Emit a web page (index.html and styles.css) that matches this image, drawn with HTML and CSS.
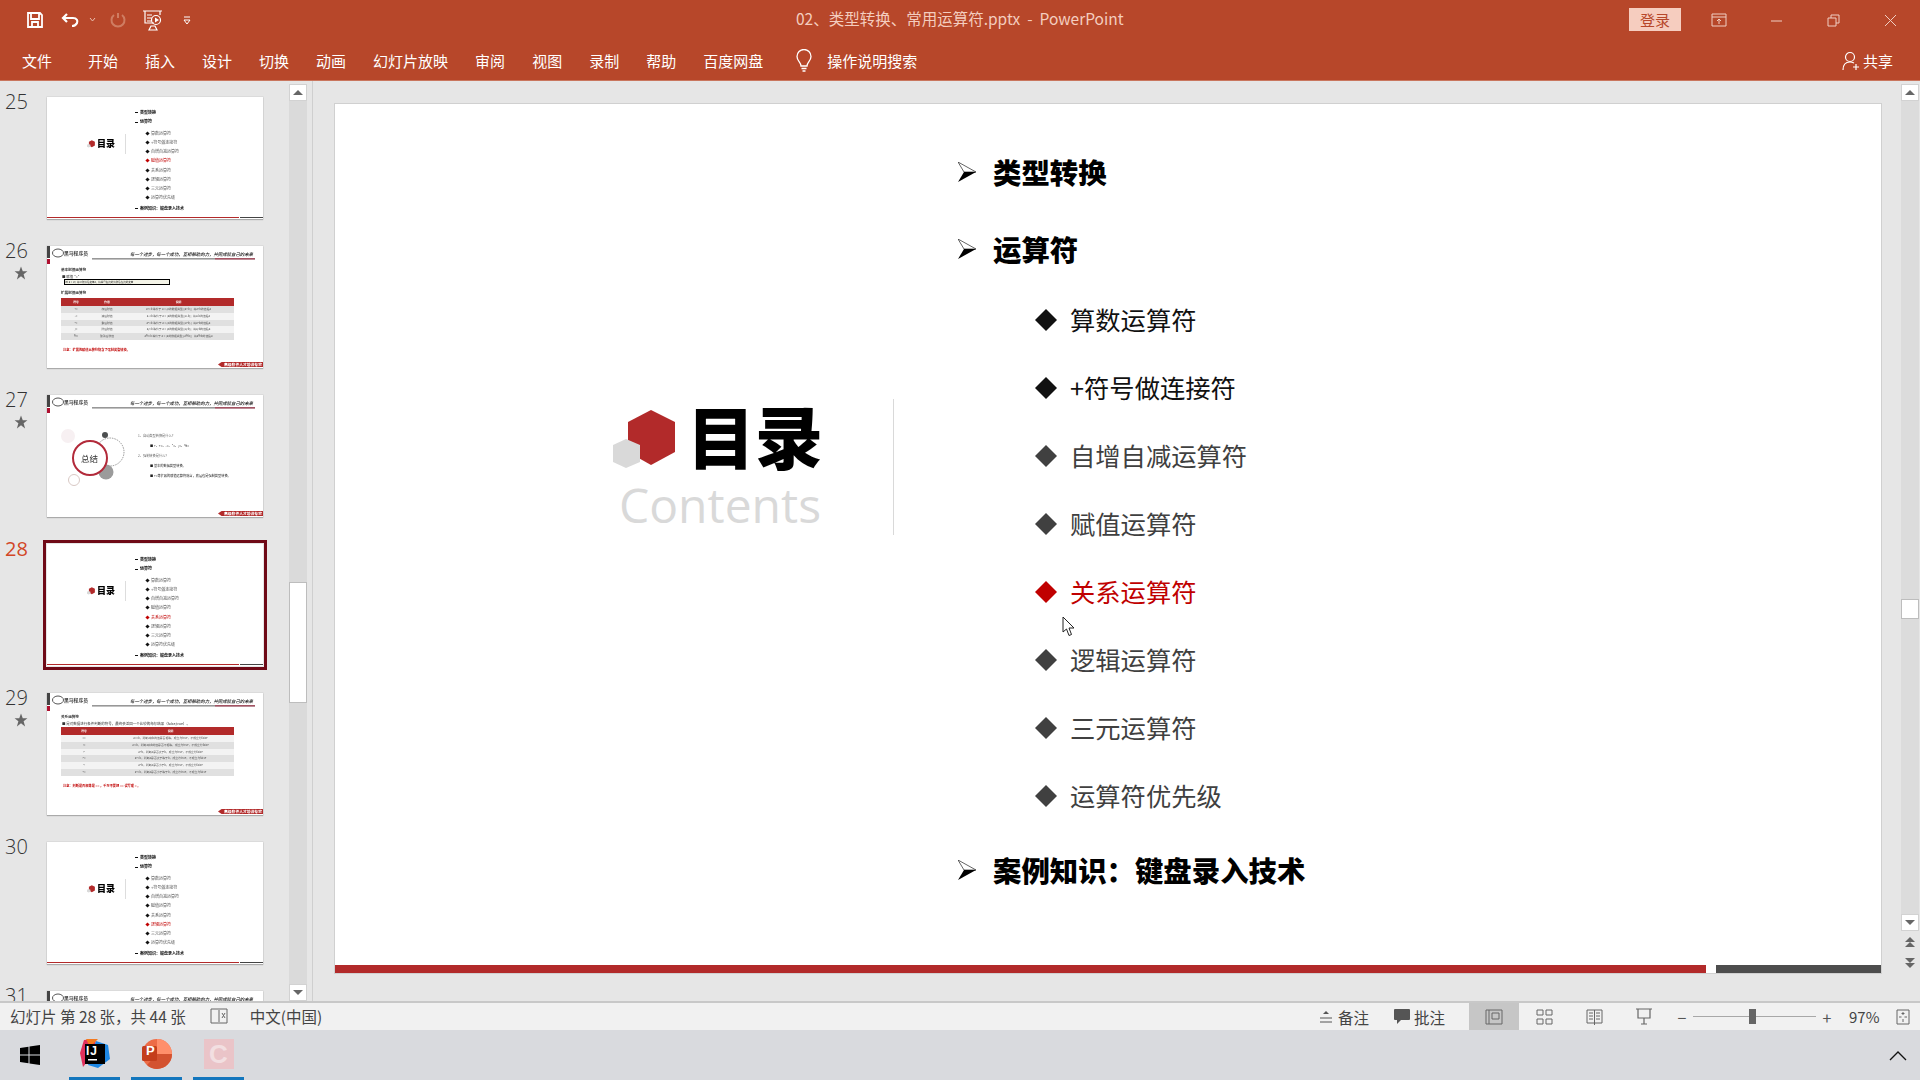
FILE: index.html
```html
<!DOCTYPE html>
<html lang="zh-CN">
<head>
<meta charset="utf-8">
<title>02、类型转换、常用运算符.pptx - PowerPoint</title>
<link rel="stylesheet" href="styles.css">
</head>
<body>
<svg class="defs" width="0" height="0">
  <symbol id="arrowhead" viewBox="0 0 18 20"><path d="M0 0 L18 10 L6 10 Z" fill="#fff" stroke="#222" stroke-width=".7"/><path d="M0 20 L18 10 L6 10 Z" fill="#000"/></symbol>
  <symbol id="diamond" viewBox="0 0 22 22"><path d="M11 0 L22 11 L11 22 L0 11 Z" fill="currentColor"/></symbol>
  <symbol id="star" viewBox="0 0 24 24"><path d="M12 1 L15 9 L23 9 L16.500 14 L19 23 L12 17.500 L5 23 L7.500 14 L1 9 L9 9 Z" fill="currentColor"/></symbol>
  <symbol id="logo" viewBox="0 0 63 59"><path d="M15 12 L38 0 L62 12 L62 42 L38 55 L15 42 Z" fill="#b22a2a"/><path d="M0 35 L13 29 L27 35 L27 52 L13 58 L0 52 Z" fill="#d9d9d9"/></symbol>
  <symbol id="itcast" viewBox="0 0 216 18"><rect width="3" height="12" fill="#444"/><rect y="13" width="3" height="5" fill="#b01030"/><ellipse cx="11" cy="7" rx="5.500" ry="4" fill="none" stroke="#555" stroke-width="1"/><rect x="45" y="12.500" width="163" height=".8" fill="#333"/><rect x="168" y="12.500" width="40" height=".8" fill="#b01030"/></symbol>
</svg>

<header class="titlebar">
  <div class="quick">
    <svg width="18" height="18" viewBox="0 0 18 18"><path d="M2 2 H14 L16 4 V16 H2 Z M5 2.500 V8 H13 V2.500 M6 16 V11 H12 V16" fill="none" stroke="#fff" stroke-width="1.800"/></svg>
    <svg class="q-undo" width="20" height="18" viewBox="0 0 20 18"><path d="M6 3 L2 7 L6 11 M2 7 H12 C16 7 17 10 16 12 C15 14 13 15 11 15" fill="none" stroke="#fff" stroke-width="2.200"/></svg>
    <svg class="q-drop" width="7" height="6" viewBox="0 0 7 6"><path d="M1 1 L3.500 4 L6 1" fill="none" stroke="#e9bfb0" stroke-width="1"/></svg>
    <svg class="q-redo" width="18" height="18" viewBox="0 0 18 18"><path d="M9 2 V7 M5 4 A6.500 6.500 0 1 0 13 4" fill="none" stroke="#cf7d62" stroke-width="2"/></svg>
    <svg class="q-show" width="22" height="22" viewBox="0 0 22 22"><path d="M1 2 H20 M3 2 V14 H12 M18 2 V6 M5 6 H10 M5 9 H10 M5 12 H9 M7 21 H15 L13 17 H9 Z" fill="none" stroke="#fff" stroke-width="1.200"/><circle cx="14" cy="11" r="4.500" fill="none" stroke="#fff" stroke-width="1.200"/><path d="M13 8.500 L17 11 L13 13.500 Z" fill="#fff"/></svg>
    <svg class="q-more" width="8" height="9" viewBox="0 0 8 9"><path d="M1 1 H7 M1 4 H7 L4 8 Z" fill="none" stroke="#fff" stroke-width="1"/></svg>
  </div>
  <div class="doc-title">02、类型转换、常用运算符.pptx&nbsp; - &nbsp;PowerPoint</div>
  <div class="win">
    <button class="login">登录</button>
    <svg class="win-ribbon" width="16" height="14" viewBox="0 0 16 14"><path d="M1 1 H15 V13 H1 Z M1 4 H15 M8 11 V6 M6 8 L8 6 L10 8" fill="none" stroke="#f0cfc3" stroke-width="1"/></svg>
    <svg class="win-min" width="13" height="13" viewBox="0 0 13 13"><path d="M1 7 H12" stroke="#f0cfc3" stroke-width="1"/></svg>
    <svg class="win-max" width="13" height="13" viewBox="0 0 13 13"><path d="M1 4 H9 V12 H1 Z M4 4 V1 H12 V9 H9" fill="none" stroke="#f0cfc3" stroke-width="1"/></svg>
    <svg class="win-close" width="13" height="13" viewBox="0 0 13 13"><path d="M1 1 L12 12 M12 1 L1 12" stroke="#f0cfc3" stroke-width="1"/></svg>
  </div>
</header>

<nav class="ribbon">
  <span class="tab tab-file">文件</span>
  <span class="tab">开始</span>
  <span class="tab">插入</span>
  <span class="tab">设计</span>
  <span class="tab">切换</span>
  <span class="tab">动画</span>
  <span class="tab">幻灯片放映</span>
  <span class="tab">审阅</span>
  <span class="tab">视图</span>
  <span class="tab">录制</span>
  <span class="tab">帮助</span>
  <span class="tab">百度网盘</span>
  <span class="search">
    <svg width="18" height="24" viewBox="0 0 18 24"><path d="M6 17 C6 13 2 12 2 7.500 A7 7 0 0 1 16 7.500 C16 12 12 13 12 17 Z M6.500 19.500 H11.500 M7.500 22 H10.500" fill="none" stroke="#fff" stroke-width="1.300"/></svg>
    操作说明搜索
  </span>
  <span class="share">
    <svg width="18" height="20" viewBox="0 0 18 20"><circle cx="8" cy="6" r="4.500" fill="none" stroke="#fff" stroke-width="1.200"/><path d="M1 19 C1 13 4 11 8 11 C10 11 11 11.500 12 12 M14 13 V19 M11 16 H17" fill="none" stroke="#fff" stroke-width="1.200"/></svg>
    共享
  </span>
</nav>

<main class="work">
  <aside class="panel">
    <div class="thumbs">

      <div class="thumb-row">
        <div class="num">25</div>
        <div class="thumb">
          <div class="mini-toc">
            <div class="mini-head"><svg class="mini-logo"><use href="#logo"/></svg><b>目录</b></div>
            <ul class="mini-list">
              <li class="m-main">类型转换</li>
              <li class="m-main">运算符</li>
              <li>算数运算符</li><li>+符号做连接符</li><li>自增自减运算符</li>
              <li class="m-on">赋值运算符</li>
              <li>关系运算符</li><li>逻辑运算符</li><li>三元运算符</li><li>运算符优先级</li>
              <li class="m-main">案例知识：键盘录入技术</li>
            </ul>
          </div>
          <div class="mini-bars"><i></i><s></s></div>
        </div>
      </div>

      <div class="thumb-row">
        <div class="num">26<svg class="star"><use href="#star"/></svg></div>
        <div class="thumb">
          <svg class="mini-top"><use href="#itcast"/></svg>
          <div class="mini-brand">黑马程序员</div>
          <div class="mini-slogan">每一个进步，每一个成功，互相帮助的力，共同成就自己的未来</div>
          <div class="mini-body">
            <p class="m-title">基本赋值运算符</p>
            <p class="m-text">■ 赋值 "="</p>
            <p class="m-box">int a = 10; 将10赋值给变量a，将等号右边的值赋给左边的变量</p>
            <p class="m-title m-second">扩展赋值运算符</p>
            <table class="m-table">
              <tr><th class="c1">符号</th><th class="c2">作用</th><th>说明</th></tr>
              <tr class="dark"><td>+=</td><td>加后赋值</td><td>a+=b 等价于 a = (a的数据类型)(a+b)；将a+b的值给a</td></tr>
              <tr><td>-=</td><td>减后赋值</td><td>a-=b 等价于 a = (a的数据类型)(a-b)；将a-b的值给a</td></tr>
              <tr class="dark"><td>*=</td><td>乘后赋值</td><td>a*=b 等价于 a = (a的数据类型)(a*b)；将a*b的值给a</td></tr>
              <tr><td>/=</td><td>除后赋值</td><td>a/=b 等价于 a = (a的数据类型)(a/b)；将a/b的值给a</td></tr>
              <tr class="dark"><td>%=</td><td>取余后赋值</td><td>a%=b 等价于 a = (a的数据类型)(a%b)；将a%b的值给a</td></tr>
            </table>
            <p class="m-note">注意：扩展的赋值运算符隐含了强制类型转换。</p>
          </div>
          <div class="mini-tag">高级软件人才培训专家</div>
        </div>
      </div>

      <div class="thumb-row">
        <div class="num">27<svg class="star"><use href="#star"/></svg></div>
        <div class="thumb">
          <svg class="mini-top"><use href="#itcast"/></svg>
          <div class="mini-brand">黑马程序员</div>
          <div class="mini-slogan">每一个进步，每一个成功，互相帮助的力，共同成就自己的未来</div>
          <div class="mini-sum">
            <div class="sum-art">
              <svg width="72" height="74" viewBox="0 0 72 74">
                <circle cx="9" cy="22" r="7" fill="#f7f0f2"/>
                <circle cx="51" cy="38" r="14" fill="none" stroke="#555" stroke-width=".6" stroke-dasharray="1.500 1"/>
                <circle cx="46" cy="21" r="3" fill="#4c4f50"/>
                <circle cx="47" cy="58" r="7.500" fill="#9b9b9b"/>
                <circle cx="31" cy="44" r="17" fill="#fff" stroke="#b22a3a" stroke-width="2"/>
                <circle cx="15" cy="66" r="5.500" fill="#fff" stroke="#d8c8c4" stroke-width="1"/>
              </svg>
              <span class="sum-label">总结</span>
            </div>
            <div class="sum-text">
              <p>1、自动类型转换是什么？</p>
              <p class="strong">■ +、+=、-=、*=、/=、%=</p>
              <p>2、强制转换是什么？</p>
              <p class="strong">■ 基本的数据类型转换。</p>
              <p class="strong">■ +=等扩展的赋值运算符隐含，底层也是强制类型转换。</p>
            </div>
          </div>
          <div class="mini-tag">高级软件人才培训专家</div>
        </div>
      </div>

      <div class="thumb-row">
        <div class="num num-on">28</div>
        <div class="thumb thumb-on">
          <div class="mini-toc">
            <div class="mini-head"><svg class="mini-logo"><use href="#logo"/></svg><b>目录</b></div>
            <ul class="mini-list">
              <li class="m-main">类型转换</li>
              <li class="m-main">运算符</li>
              <li>算数运算符</li><li>+符号做连接符</li><li>自增自减运算符</li><li>赋值运算符</li>
              <li class="m-on">关系运算符</li>
              <li>逻辑运算符</li><li>三元运算符</li><li>运算符优先级</li>
              <li class="m-main">案例知识：键盘录入技术</li>
            </ul>
          </div>
          <div class="mini-bars"><i></i><s></s></div>
        </div>
      </div>

      <div class="thumb-row">
        <div class="num">29<svg class="star"><use href="#star"/></svg></div>
        <div class="thumb">
          <svg class="mini-top"><use href="#itcast"/></svg>
          <div class="mini-brand">黑马程序员</div>
          <div class="mini-slogan">每一个进步，每一个成功，互相帮助的力，共同成就自己的未来</div>
          <div class="mini-body">
            <p class="m-title">关系运算符</p>
            <p class="m-text">■ 是对数据进行条件判断的符号，最终会返回一个比较的布尔结果（false,true）。</p>
            <table class="m-table m-table2">
              <tr><th class="c1">符号</th><th>说明</th></tr>
              <tr><td>==</td><td>a==b，判断a和b的值是否相等，成立为true，不成立为false</td></tr>
              <tr class="dark"><td>!=</td><td>a!=b，判断a和b的值是否不相等，成立为true，不成立为false</td></tr>
              <tr><td>&gt;</td><td>a&gt;b，判断a是否大于b，成立为true，不成立为false</td></tr>
              <tr class="dark"><td>&gt;=</td><td>a&gt;=b，判断a是否大于等于b，成立为true，不成立为false</td></tr>
              <tr><td>&lt;</td><td>a&lt;b，判断a是否小于b，成立为true，不成立为false</td></tr>
              <tr class="dark"><td>&lt;=</td><td>a&lt;=b，判断a是否小于等于b，成立为true，不成立为false</td></tr>
            </table>
            <p class="m-note">注意：判断是否相等是 == ，千万不要把 == 误写成 = 。</p>
          </div>
          <div class="mini-tag">高级软件人才培训专家</div>
        </div>
      </div>

      <div class="thumb-row">
        <div class="num">30</div>
        <div class="thumb">
          <div class="mini-toc">
            <div class="mini-head"><svg class="mini-logo"><use href="#logo"/></svg><b>目录</b></div>
            <ul class="mini-list">
              <li class="m-main">类型转换</li>
              <li class="m-main">运算符</li>
              <li>算数运算符</li><li>+符号做连接符</li><li>自增自减运算符</li><li>赋值运算符</li><li>关系运算符</li>
              <li class="m-on">逻辑运算符</li>
              <li>三元运算符</li><li>运算符优先级</li>
              <li class="m-main">案例知识：键盘录入技术</li>
            </ul>
          </div>
          <div class="mini-bars"><i></i><s></s></div>
        </div>
      </div>

      <div class="thumb-row">
        <div class="num">31</div>
        <div class="thumb">
          <svg class="mini-top"><use href="#itcast"/></svg>
          <div class="mini-brand">黑马程序员</div>
          <div class="mini-slogan">每一个进步，每一个成功，互相帮助的力，共同成就自己的未来</div>
        </div>
      </div>

    </div>
    <div class="scroll">
      <div class="sb-btn"><span class="up"></span></div>
      <div class="sb-track sb-track-left"><div class="sb-thumb sb-thumb-left"></div></div>
      <div class="sb-btn"><span class="down"></span></div>
    </div>
  </aside>

  <section class="editor">
    <article class="slide">
      <div class="slide-body">
        <div class="toc-head">
          <div class="toc-title">
            <svg class="toc-logo"><use href="#logo"/></svg>
            <h1>目录</h1>
          </div>
          <div class="toc-en">Contents</div>
        </div>
        <ul class="toc-list">
          <li class="main"><svg class="arrow"><use href="#arrowhead"/></svg>类型转换</li>
          <li class="main"><svg class="arrow"><use href="#arrowhead"/></svg>运算符</li>
          <li class="sub first done"><svg class="dia"><use href="#diamond"/></svg>算数运算符</li>
          <li class="sub done"><svg class="dia"><use href="#diamond"/></svg>+符号做连接符</li>
          <li class="sub"><svg class="dia"><use href="#diamond"/></svg>自增自减运算符</li>
          <li class="sub"><svg class="dia"><use href="#diamond"/></svg>赋值运算符</li>
          <li class="sub now"><svg class="dia"><use href="#diamond"/></svg>关系运算符</li>
          <li class="sub"><svg class="dia"><use href="#diamond"/></svg>逻辑运算符</li>
          <li class="sub"><svg class="dia"><use href="#diamond"/></svg>三元运算符</li>
          <li class="sub"><svg class="dia"><use href="#diamond"/></svg>运算符优先级</li>
          <li class="main last"><svg class="arrow"><use href="#arrowhead"/></svg>案例知识：键盘录入技术</li>
        </ul>
      </div>
      <div class="slide-bars"><i></i><s></s></div>
    </article>
    <svg class="cursor" width="14" height="21" viewBox="0 0 14 21"><path d="M1 1 V16 L4.500 13 L7 19.500 L9.500 18.500 L7 12 H12 Z" fill="#fff" stroke="#222" stroke-width="1"/></svg>
  </section>

  <div class="scroll scroll-right">
    <div class="sb-btn"><span class="up"></span></div>
    <div class="sb-track"><div class="sb-thumb sb-thumb-right"></div></div>
    <div class="sb-btn"><span class="down"></span></div>
    <div class="sb-page"><span class="up"></span><span class="up"></span></div>
    <div class="sb-page"><span class="down"></span><span class="down"></span></div>
  </div>
</main>

<footer class="status">
  <span class="st-count">幻灯片 第 28 张，共 44 张</span>
  <svg class="st-spell" width="18" height="16" viewBox="0 0 18 16"><path d="M8 1 H1 V15 H8 M9 0 V16 M10 1 H17 V15 H10 M12 5 L15 10 M15 5 L12 10" fill="none" stroke="#666" stroke-width="1"/></svg>
  <span class="st-lang">中文(中国)</span>
  <span class="st-right">
    <span class="st-item">
      <svg width="14" height="14" viewBox="0 0 14 14"><path d="M7 1 L10 4 H4 Z" fill="#555"/><path d="M1 8 H13 M1 12 H13" stroke="#555" stroke-width="1"/></svg>备注
    </span>
    <span class="st-item st-comment">
      <svg width="18" height="17" viewBox="0 0 18 17"><path d="M2 1 H16 Q17 1 17 2 V11 Q17 12 16 12 H8 L4 16 V12 H2 Q1 12 1 11 V2 Q1 1 2 1 Z" fill="#555"/></svg>批注
    </span>
    <span class="view view-on"><svg width="18" height="16" viewBox="0 0 18 16"><path d="M1 1 H17 V15 H1 Z M4 1 V15 M7 4 H14 V10 H7 Z" fill="none" stroke="#666" stroke-width="1"/></svg></span>
    <span class="view"><svg width="17" height="16" viewBox="0 0 17 16"><path d="M1 1 H7 V6 H1 Z M10 1 H16 V6 H10 Z M1 10 H7 V15 H1 Z M10 10 H16 V15 H10 Z" fill="none" stroke="#666" stroke-width="1"/></svg></span>
    <span class="view"><svg width="17" height="16" viewBox="0 0 17 16"><path d="M1 1 H16 V14 H1 Z M8.500 1 V16 M3 4 H7 M3 7 H7 M3 10 H7 M10 4 H14 M10 7 H14 M10 10 H14" fill="none" stroke="#666" stroke-width="1"/></svg></span>
    <span class="view"><svg width="18" height="17" viewBox="0 0 18 17"><path d="M1 1 H17 M3 1 V10 H15 V1 M9 10 V16 M6 16 H12" fill="none" stroke="#666" stroke-width="1.200"/></svg></span>
    <span class="zoom">
      <span class="z-btn">−</span>
      <span class="z-track"><span class="z-knob"></span></span>
      <span class="z-btn">+</span>
    </span>
    <span class="z-pct">97%</span>
    <svg class="z-fit" width="14" height="16" viewBox="0 0 14 16"><path d="M1 1 H13 V15 H1 Z M7 3 V6 M5.500 4.500 H8.500 M7 10 V13 M3 8 H5.500 M8.500 8 H11" fill="none" stroke="#666" stroke-width="1"/></svg>
  </span>
</footer>

<div class="taskbar">
  <svg class="win-logo" width="20" height="20" viewBox="0 0 20 20"><path d="M0 3 L8.500 1.700 V9.500 H0 Z M9.500 1.500 L20 0 V9.500 H9.500 Z M0 10.500 H8.500 V18.300 L0 17 Z M9.500 10.500 H20 V20 L9.500 18.500 Z" fill="#000"/></svg>
  <div class="apps">
    <span class="app">
      <svg width="30" height="30" viewBox="0 0 30 30"><path d="M4 1 L16 0 L14 14 L3 28 L0 14 Z" fill="#e0305c"/><path d="M16 2 L28 6 L30 20 L18 29 L8 26 Z" fill="#1e88e5"/><path d="M6 0 L18 0 L10 8 Z" fill="#f4791f"/><rect x="5" y="5" width="20" height="20" fill="#000"/><rect x="8" y="20" width="9" height="1.500" fill="#fff"/></svg>
      <span class="ij">IJ</span>
    </span>
    <span class="app">
      <svg width="30" height="30" viewBox="0 0 30 30"><circle cx="15" cy="15" r="15" fill="#ed6c47"/><path d="M15 0 A15 15 0 0 1 30 15 H15 Z" fill="#ff8f6b"/><path d="M15 15 H30 A15 15 0 0 1 15 30 A15 15 0 0 1 5 26 Z" fill="#d35230"/><rect x="0" y="7" width="15" height="15" rx="1.500" fill="#c43e1c"/></svg>
      <span class="pp">P</span>
    </span>
    <span class="app">
      <span class="camt">C</span>
    </span>
  </div>
  <svg class="tray" width="18" height="11" viewBox="0 0 18 11"><path d="M1 10 L9 2 L17 10" fill="none" stroke="#111" stroke-width="1.300"/></svg>
</div>
</body>
</html>
```

FILE: styles.css
```css
* {
    box-sizing: border-box;
}

html, body {
    margin: 0;
    height: 1080px;
    overflow: hidden;
}

body {
    width: 1920px;
    display: flex;
    flex-direction: column;
    font-family: "Noto Sans CJK SC", "Liberation Sans", sans-serif;
    background: #e6e6e6;
    color: #444;
}

.defs {
    position: absolute;
}

ul, p, h1 {
    margin: 0;
    padding: 0;
}

ul {
    list-style: none;
}

/* title bar */
.titlebar {
    height: 40px;
    flex: none;
    display: flex;
    align-items: center;
    background: #b7472a;
    position: relative;
}

.quick {
    display: flex;
    align-items: center;
    padding-left: 26px;
    gap: 4px;
}

.q-undo {
    margin-left: 13px;
}

.q-drop {
    margin-left: 4px;
}

.q-redo {
    margin-left: 9px;
}

.q-show {
    margin-left: 11px;
}

.q-more {
    margin-left: 15px;
}

.doc-title {
    position: absolute;
    left: 796px;
    top: 7px;
    font-size: 15.500px;
    line-height: 22px;
    color: #f4cdbf;
    white-space: nowrap;
}

.win {
    margin-left: auto;
    display: flex;
    align-items: center;
}

.login {
    width: 52px;
    height: 23px;
    margin-top: -1px;
    padding: 0;
    border: 0;
    background: #f6cdbf;
    color: #b7472a;
    font: 15px/23px "Noto Sans CJK SC", sans-serif;
}

.win-ribbon {
    margin-left: 30px;
}

.win-min {
    margin-left: 43px;
}

.win-max {
    margin-left: 44px;
}

.win-close {
    margin-left: 44px;
    margin-right: 23px;
}

/* ribbon tabs */
.ribbon {
    height: 41px;
    flex: none;
    display: flex;
    align-items: center;
    gap: 27px;
    padding: 1px 27px 0 22px;
    background: #b7472a;
    color: #fff;
    font-size: 15px;
    line-height: 22px;
    border-bottom: 1px solid #c9765e;
}

.tab-file {
    margin-right: 9px;
}

.search {
    display: flex;
    align-items: center;
    gap: 14px;
    margin-left: 5px;
}

.share {
    margin-left: auto;
    display: flex;
    align-items: center;
    gap: 3px;
}

/* work area */
.work {
    flex: 1;
    min-height: 0;
    display: flex;
    background: #e6e6e6;
    border-bottom: 2px solid #c8c8c8;
}

.panel {
    width: 313px;
    flex: none;
    display: flex;
    border-right: 1px solid #cfcfcf;
}

.thumbs {
    width: 289px;
    flex: none;
    padding-top: 16px;
    overflow: hidden;
}

.thumb-row {
    height: 149px;
    display: flex;
    padding-left: 5px;
}

.num {
    width: 42px;
    flex: none;
    margin-top: -5px;
    font-family: "Open Sans", sans-serif;
    font-size: 20px;
    font-weight: 300;
    line-height: 20px;
    color: #333;
    display: flex;
    flex-direction: column;
}

.num-on {
    color: #d24726;
    font-weight: 400;
}

.star {
    width: 14px;
    height: 14px;
    margin: 5px 0 0 9px;
    color: #666;
}

.thumb {
    width: 216px;
    height: 122px;
    flex: none;
    position: relative;
    display: flex;
    flex-direction: column;
    background: #fff;
    box-shadow: 0 1px 1px #aaa, 0 0 0 .5px #cfcfcf;
    color: #333;
    font-size: 3.500px;
    line-height: 5px;
}

/* the thumbnails are soft in the reference */
.thumb > * {
    filter: blur(.3px);
}

.thumb-on {
    outline: 3px solid #6f0a17;
    outline-offset: 1px;
    box-shadow: none;
}

/* table of contents, thumbnail size */
.mini-toc {
    flex: 1;
    display: flex;
    min-height: 0;
}

.mini-head {
    width: 79px;
    flex: none;
    height: 20px;
    margin-top: 37px;
    padding-left: 40px;
    display: flex;
    align-items: center;
    gap: 2px;
    border-right: 1px solid #ddd;
}

.mini-logo {
    width: 8px;
    height: 8px;
    flex: none;
}

.mini-head b {
    font-size: 9px;
    line-height: 12px;
    font-weight: 900;
    color: #000;
}

.mini-list {
    padding: 11px 0 0 20px;
    font-size: 4px;
    line-height: 9.250px;
    color: #555;
}

.mini-list li {
    height: 9.250px;
    white-space: nowrap;
}

.mini-list li::before {
    content: "";
    display: inline-block;
    width: 3px;
    height: 3px;
    margin-right: 2px;
    background: #111;
    transform: rotate(45deg);
}

.mini-list li.m-main {
    margin-left: -11px;
    color: #111;
    font-weight: 700;
}

.mini-list li.m-main:nth-child(2) {
    margin-bottom: 2px;
}

.mini-list li.m-main:last-child {
    margin-top: 1px;
}

.mini-list li.m-main::before {
    width: 3px;
    height: 1px;
    vertical-align: middle;
    transform: none;
}

.mini-list li.m-on {
    color: #c00000;
}

.mini-list li.m-on::before {
    background: #c00000;
}

.mini-bars, .slide-bars {
    flex: none;
    display: flex;
}

.mini-bars {
    height: 1.500px;
    gap: 1.500px;
    margin-bottom: 1px;
}

.mini-bars i, .slide-bars i {
    flex: 1;
    background: #b22a2a;
}

.mini-bars s {
    width: 23px;
    background: #444;
}

/* content slide, thumbnail size */
.mini-top {
    width: 216px;
    height: 18px;
    flex: none;
}

.mini-brand {
    position: absolute;
    left: 17px;
    top: 4px;
    font-size: 4.800px;
    font-weight: 700;
    color: #444;
}

.mini-slogan {
    position: absolute;
    left: 83px;
    top: 5px;
    font-size: 4.400px;
    line-height: 6px;
    font-style: italic;
    font-weight: 500;
    white-space: nowrap;
    color: #111;
}

.mini-body {
    padding: 2px 14px 0;
}

.m-title {
    font-weight: 700;
    font-size: 3.600px;
    line-height: 8px;
}

.m-second {
    margin-top: 4px;
}

.m-text {
    padding-left: 1px;
}

.m-box {
    width: 106px;
    height: 6px;
    margin: 0 0 0 3px;
    border: 1px solid #000;
    font-size: 2.500px;
    line-height: 4px;
    white-space: nowrap;
    background: #f4f4e8;
}

.m-table {
    width: 173px;
    margin-top: 1px;
    border-collapse: collapse;
    table-layout: fixed;
    font-size: 2.800px;
    line-height: 6.800px;
    text-align: center;
}

.m-table th {
    height: 8px;
    padding: 0;
    background: #b22a2a;
    color: #fff;
}

.m-table .c1 {
    width: 30px;
}

.m-table .c2 {
    width: 32px;
}

.m-table2 .c1 {
    width: 46px;
}

.m-table td {
    padding: 0;
    white-space: nowrap;
    color: #555;
    background: #f3f3f3;
}

.m-table .dark td {
    background: #e0e0e0;
}

.m-note {
    margin-top: 7px;
    padding-left: 2px;
    color: #c00000;
    font-weight: 700;
    font-size: 3.200px;
}

.mini-tag {
    position: absolute;
    right: 0;
    bottom: 1px;
    width: 45px;
    height: 5px;
    padding-left: 6px;
    background: #b22a2a;
    clip-path: polygon(8% 0, 100% 0, 100% 100%, 8% 100%, 0 50%);
    color: #fff;
    font-size: 3.800px;
    font-weight: 700;
    line-height: 5px;
    white-space: nowrap;
}

/* summary slide, thumbnail size */
.mini-sum {
    position: absolute;
    left: 12px;
    top: 19px;
    display: flex;
}

.sum-art {
    width: 79px;
    flex: none;
    position: relative;
}

.sum-label {
    position: absolute;
    left: 22px;
    top: 38px;
    font-size: 8.500px;
    line-height: 12px;
    color: #333;
}

.sum-text {
    padding-top: 19px;
    font-size: 3.200px;
    line-height: 5px;
    color: #666;
}

.sum-text p {
    margin-bottom: 5px;
    white-space: nowrap;
}

.sum-text .strong {
    margin-left: 12px;
    color: #222;
}

/* scrollbars */
.scroll {
    width: 18px;
    flex: none;
    display: flex;
    flex-direction: column;
    margin-top: 3px;
    background: #dadada;
}

.scroll-right {
    margin: 3px 1px 0 0;
    padding-bottom: 28px;
    background: none;
}

.scroll-right .sb-track {
    background: #dcdcdc;
}

.sb-btn {
    height: 17px;
    flex: none;
    display: flex;
    align-items: center;
    justify-content: center;
    background: #fff;
    border: 1px solid #d2d2d2;
}

.sb-track {
    flex: 1;
}

.sb-track-left {
    padding-top: 481px;
}

.sb-thumb {
    background: #fff;
    border: 1px solid #bdbdbd;
}

.sb-thumb-left {
    height: 121px;
}

.sb-thumb-right {
    height: 20px;
    margin-top: 498px;
}

.up, .down {
    width: 0;
    height: 0;
    border-left: 5px solid transparent;
    border-right: 5px solid transparent;
}

.up {
    border-bottom: 5px solid #666;
}

.down {
    border-top: 5px solid #666;
}

.sb-page {
    height: 21px;
    flex: none;
    display: flex;
    flex-direction: column;
    align-items: center;
    justify-content: center;
}

/* main slide */
.editor {
    flex: 1;
    min-width: 0;
    padding: 22px 0 0 21px;
    position: relative;
}

.slide {
    width: 1548px;
    height: 871px;
    display: flex;
    flex-direction: column;
    background: #fff;
    border: 1px solid #d0d0d0;
}

.slide-body {
    flex: 1;
    min-height: 0;
    display: flex;
    align-items: flex-start;
}

.toc-head {
    width: 559px;
    height: 136px;
    margin-top: 295px;
    padding-left: 278px;
    border-right: 1px solid #d9d9d9;
}

.toc-title {
    display: flex;
    align-items: flex-start;
    height: 84px;
}

.toc-logo {
    width: 63px;
    height: 59px;
    margin-top: 11px;
    flex: none;
}

.toc-title h1 {
    margin-left: 11px;
    font-size: 68px;
    line-height: 72px;
    font-weight: 900;
    color: #000;
    white-space: nowrap;
}

.toc-en {
    margin: -3px 0 0 6px;
    font-family: "Open Sans", sans-serif;
    font-size: 48px;
    line-height: 50px;
    color: #d9d9d9;
}

.toc-list {
    margin-left: 64px;
    padding-top: 48px;
}

.toc-list li {
    height: 40px;
    padding-bottom: 2px;
    display: flex;
    align-items: center;
    white-space: nowrap;
}

.main {
    font-size: 28.400px;
    font-weight: 900;
    color: #000;
    margin-bottom: 37px;
}

.main.last {
    margin: 34px 0 0;
}

.arrow {
    width: 18px;
    height: 20px;
    margin: 2px 17px 0 0;
    flex: none;
}

.sub {
    margin-left: 77px;
    margin-bottom: 28px;
    font-size: 25.300px;
    color: #404040;
}

.sub.first {
    margin-top: -6px;
}

.sub:nth-child(10) {
    margin-bottom: 0;
}

.sub.done {
    color: #111;
}

.sub.now {
    color: #c00000;
}

.dia {
    width: 22px;
    height: 22px;
    margin: 2px 13px 0 0;
    flex: none;
}

.slide-bars {
    height: 8px;
    gap: 10px;
}

.slide-bars s {
    width: 165px;
    background: #4d4d4d;
}

.cursor {
    position: absolute;
    left: 749px;
    top: 535px;
}

/* status bar */
.status {
    height: 27px;
    flex: none;
    display: flex;
    align-items: center;
    padding-left: 10px;
    padding-bottom: 1px;
    background: #f1f1f1;
    font-size: 15.500px;
    line-height: 20px;
    color: #444;
}

.st-spell {
    margin-left: 24px;
}

.st-lang {
    margin-left: 22px;
}

.st-right {
    margin-left: auto;
    display: flex;
    align-items: center;
    height: 27px;
    margin-bottom: -1px;
}

.st-item {
    display: flex;
    align-items: center;
    gap: 5px;
}

.st-comment {
    margin-left: 24px;
    gap: 3px;
}

.view {
    width: 50px;
    height: 100%;
    display: flex;
    align-items: center;
    justify-content: center;
}

.st-comment + .view {
    margin-left: 24px;
}

.view-on {
    background: #c6c6c6;
}

.zoom {
    display: flex;
    align-items: center;
    margin-left: 7px;
    gap: 5px;
}

.z-btn {
    width: 12px;
    text-align: center;
    font-size: 16px;
    color: #555;
}

.z-track {
    width: 123px;
    height: 1px;
    background: #a8a8a8;
    position: relative;
    display: block;
}

.z-knob {
    position: absolute;
    left: 56px;
    top: -7px;
    width: 7px;
    height: 15px;
    background: #666;
}

.z-pct {
    margin-left: 16px;
    width: 37px;
    font-size: 15px;
    white-space: nowrap;
}

.z-fit {
    margin: 0 10px 0 10px;
}

/* task bar */
.taskbar {
    height: 50px;
    flex: none;
    display: flex;
    align-items: center;
    padding-left: 20px;
    background: #d9dade;
}

.apps {
    display: flex;
    margin-left: 29px;
    gap: 11px;
    height: 100%;
}

.app {
    width: 51px;
    height: 50px;
    display: flex;
    align-items: center;
    justify-content: center;
    position: relative;
    border-bottom: 3px solid #1376bd;
}

.ij {
    position: absolute;
    left: 17px;
    top: 14px;
    font: 700 12px/14px "Liberation Sans", sans-serif;
    letter-spacing: 1px;
    color: #fff;
}

.pp {
    position: absolute;
    left: 15px;
    top: 13px;
    font: 700 13px/16px "Liberation Sans", sans-serif;
    color: #fff;
}

.camt {
    width: 30px;
    height: 30px;
    display: flex;
    align-items: center;
    justify-content: center;
    background: #eac4c8;
    color: #f2dfe1;
    font: 700 26px/30px "Liberation Sans", sans-serif;
}

.tray {
    margin-left: auto;
    margin-right: 13px;
}
```
